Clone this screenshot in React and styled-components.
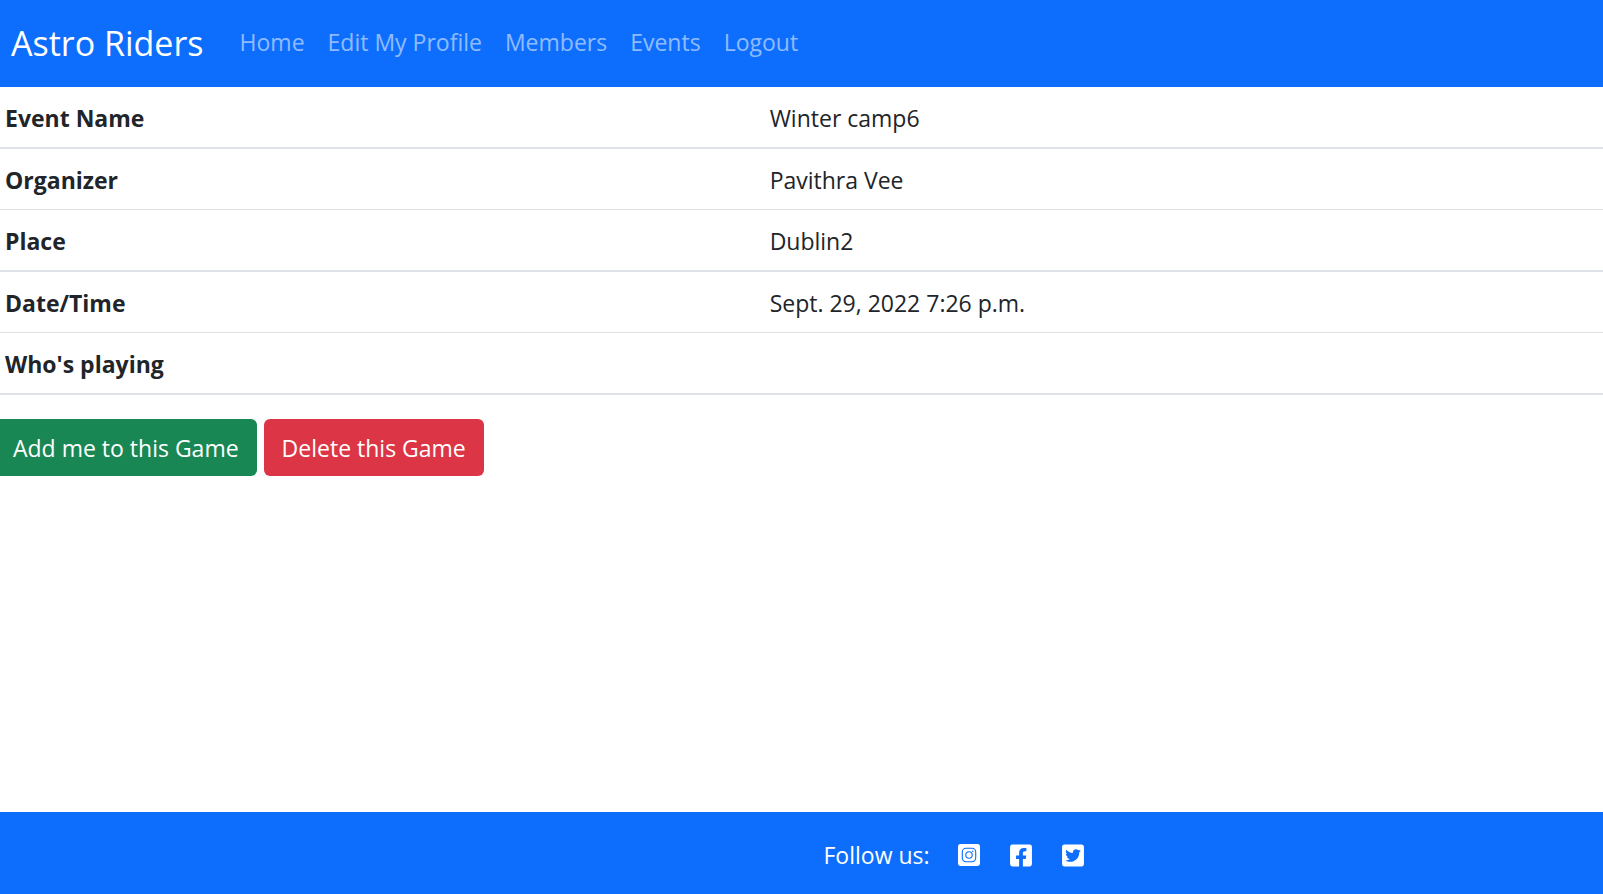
import React from "react";
import styled, { createGlobalStyle } from "styled-components";
import { FaFacebookSquare, FaTwitterSquare } from "react-icons/fa";

const GlobalStyle = createGlobalStyle`
  *, *::before, *::after { box-sizing: border-box; }
  body {
    margin: 0;
    background: #fff;
    color: #212529;
    font-family: "Segoe UI", "Open Sans", "Noto Sans", sans-serif;
    font-size: 23px;
    line-height: 36px;
    overflow-x: hidden;
  }
`;

const Page = styled.div`
  display: flex;
  flex-direction: column;
  min-height: 100vh;
`;

const Navbar = styled.nav`
  display: flex;
  align-items: center;
  gap: 25px;
  padding: 16px 11px 17px;
  background: #0d6efd;
`;

const Brand = styled.a`
  color: #fff;
  font-size: 34px;
  line-height: 54px;
  text-decoration: none;
  white-space: nowrap;
`;

const NavList = styled.ul`
  display: flex;
  gap: 1px;
  margin: 0;
  padding: 0;
  list-style: none;
`;

const NavLink = styled.a`
  display: block;
  padding: 0 11px 2px;
  color: rgba(255, 255, 255, 0.55);
  text-decoration: none;
  white-space: nowrap;
`;

const Main = styled.main`
  flex: 1;
`;

const DetailsTable = styled.table`
  width: 100%;
  table-layout: fixed;
  border-collapse: separate;
  border-spacing: 0;
`;

const Row = styled.tr`
  & > * {
    height: ${(p) => (p.$heavy ? 62 : 61)}px;
    padding: 13px 5px 11px;
    border-bottom: ${(p) => (p.$heavy ? 2 : 1)}px solid #dee2e6;
    text-align: left;
    vertical-align: top;
  }
`;

const Label = styled.th`
  width: 47.7%;
  font-weight: 700;
`;

const Value = styled.td`
  font-weight: 400;
`;

const Actions = styled.div`
  display: flex;
  gap: 7px;
  margin: 24px 0 24px -5px;
`;

const Button = styled.button`
  padding: 11px 18px 10px;
  border: 0;
  border-radius: 6px;
  background: ${(p) => (p.$danger ? "#dc3545" : "#198754")};
  color: #fff;
  font: inherit;
  cursor: pointer;
`;

const Footer = styled.footer`
  display: flex;
  align-items: center;
  gap: 28px;
  min-height: 82px;
  padding: 24px 22px 20px calc(50% + 22px);
  background: #0d6efd;
  color: #fff;
`;

const SocialList = styled.ul`
  display: flex;
  gap: 30px;
  margin: 0;
  padding: 0;
  list-style: none;
`;

const SocialLink = styled.a`
  display: flex;
  align-items: center;
  justify-content: center;
  width: 22px;
  height: 25px;
  color: #fff;
  font-size: 25px;
`;

function InstagramSquare(props) {
  return (
    <svg width="22" height="22" viewBox="0 0 22 22" fill="none" {...props}>
      <rect width="22" height="22" rx="2.4" fill="currentColor" />
      <g stroke="#0d6efd" strokeWidth="1.1">
        <rect x="4.3" y="4.3" width="13.4" height="13.4" rx="3.6" />
        <circle cx="11" cy="11" r="3.2" />
      </g>
      <circle cx="14.8" cy="7.2" r="0.8" fill="#0d6efd" />
    </svg>
  );
}

const links = ["Home", "Edit My Profile", "Members", "Events", "Logout"];

const details = [
  ["Event Name", "Winter camp6"],
  ["Organizer", "Pavithra Vee"],
  ["Place", "Dublin2"],
  ["Date/Time", "Sept. 29, 2022 7:26 p.m."],
  ["Who's playing", ""],
];

const socials = [
  ["Instagram", InstagramSquare],
  ["Facebook", FaFacebookSquare],
  ["Twitter", FaTwitterSquare],
];

export default function App() {
  return (
    <Page>
      <GlobalStyle />
      <Navbar>
        <Brand href="#">Astro Riders</Brand>
        <NavList>
          {links.map((link) => (
            <li key={link}>
              <NavLink href="#">{link}</NavLink>
            </li>
          ))}
        </NavList>
      </Navbar>
      <Main>
        <DetailsTable>
          <tbody>
            {details.map(([label, value], i) => (
              <Row key={label} $heavy={i % 2 === 0}>
                <Label scope="row">{label}</Label>
                <Value>{value}</Value>
              </Row>
            ))}
          </tbody>
        </DetailsTable>
        <Actions>
          <Button type="button">Add me to this Game</Button>
          <Button type="button" $danger>Delete this Game</Button>
        </Actions>
      </Main>
      <Footer>
        <span>Follow us:</span>
        <SocialList>
          {socials.map(([name, Icon]) => (
            <li key={name}>
              <SocialLink href="#" aria-label={name}>
                <Icon aria-hidden="true" />
              </SocialLink>
            </li>
          ))}
        </SocialList>
      </Footer>
    </Page>
  );
}
